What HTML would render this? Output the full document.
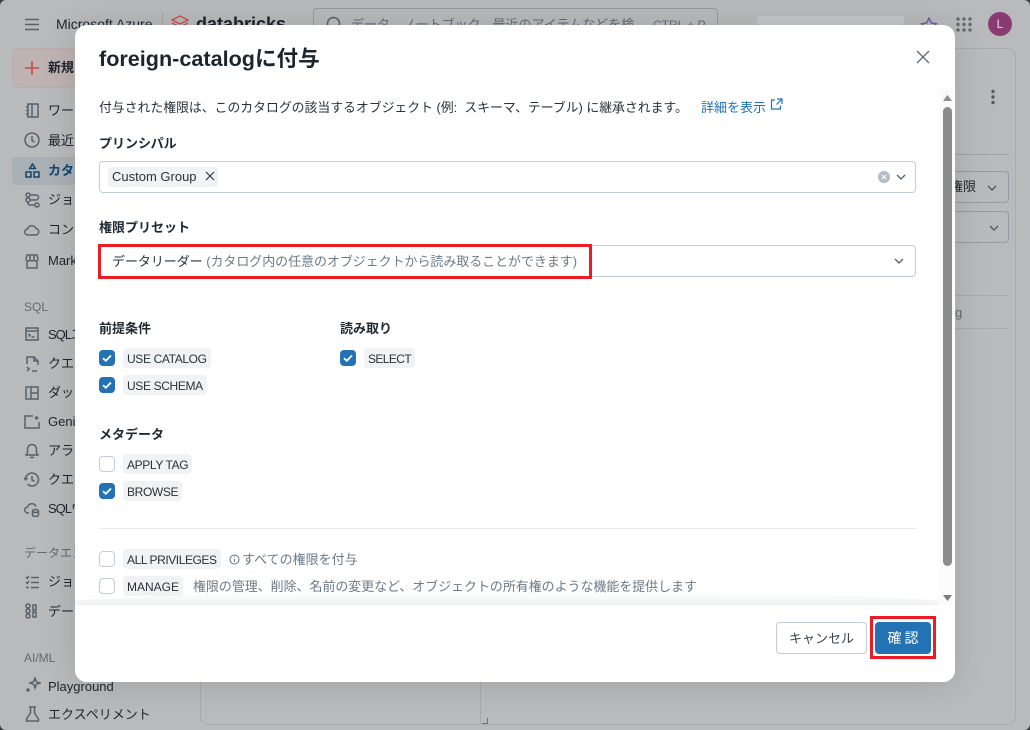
<!DOCTYPE html>
<html lang="ja">
<head>
<meta charset="utf-8">
<style>
html,body{margin:0;padding:0}
body{width:1030px;height:730px;overflow:hidden;position:relative;background:#b9babb;font-family:"Liberation Sans","Noto Sans CJK JP",sans-serif;font-size:13px;color:#1f2a33}
.a{position:absolute;white-space:nowrap}
.bg{color:#1d262d}
.ic{position:absolute;fill:none;stroke:#56636e;stroke-width:1.5}
.grp{color:#5f6b75;font-size:12px}
#modal{position:absolute;left:75px;top:25px;width:880px;height:657px;background:#fff;border-radius:12px;overflow:hidden}
#shadow{position:absolute;left:75px;top:25px;width:880px;height:657px;border-radius:12px;box-shadow:0 2px 34px rgba(0,0,0,.13)}
#modal .a{line-height:18px}
.lb{font-weight:700;font-size:13px;color:#1f2a33;margin-top:1px}
.tag{position:absolute;height:20px;background:#f1f2f4;border-radius:4px;font-size:12px;line-height:22px;padding:0 4px;white-space:nowrap;color:#27323a;box-sizing:border-box;letter-spacing:-.36px}
.cb{position:absolute;width:16px;height:16px;border-radius:4px;box-sizing:border-box}
.on{background:#2272b4}
.off{background:#fff;border:1px solid #c0cdd8}
.cb svg{position:absolute;left:0;top:0}
.sel{position:absolute;left:24px;width:817px;height:32px;border:1px solid #c0cdd8;border-radius:4px;box-sizing:border-box;background:#fff}
.red{position:absolute;border:3px solid #ed1c24;box-sizing:border-box}
.g{color:#6b7a86}
</style>
</head>
<body>
<!-- window corners -->
<div class="a" style="left:0;top:0;width:1030px;height:730px;box-sizing:border-box;border-radius:6px;box-shadow:0 0 0 6px #3a3a3a"></div>

<!-- top bar -->
<svg class="ic" style="left:25px;top:18px" width="14" height="13" viewBox="0 0 14 13"><path d="M0 1.500h14M0 6.500h14M0 11.500h14" stroke-width="1.600"/></svg>
<div class="a bg" style="left:56px;top:15px;font-size:14px;line-height:18px">Microsoft Azure</div>
<div class="a" style="left:162px;top:12px;width:1px;height:14px;background:#a4a6a8"></div>
<svg class="a" style="left:171px;top:15px" width="18" height="12" viewBox="0 0 18 12" fill="none" stroke="#c9504b" stroke-width="1.300"><path d="M1 5l8-4 8 4-8 4zM1 8l8 4 8-4"/></svg>
<div class="a" style="left:196px;top:14px;font-size:18px;font-weight:700;color:#1d2329;line-height:20px">databricks</div>
<div class="a" style="left:313px;top:8px;width:405px;height:30px;border:1px solid #8f9ba5;border-radius:4px;box-sizing:border-box"></div>
<svg class="ic" style="left:326px;top:16px" width="16" height="16" viewBox="0 0 16 16"><circle cx="7.500" cy="7.500" r="6"/></svg>
<div class="a" style="left:351px;top:16px;font-size:13px;color:#626d76;line-height:18px">データ、ノートブック、最近のアイテムなどを検</div>
<div class="a" style="left:653px;top:17px;font-size:12px;color:#626d76;line-height:16px">CTRL + P</div>
<div class="a" style="left:757px;top:16px;width:147px;height:9px;background:#c6c7c8;border-radius:3px"></div>
<svg class="a" style="left:920px;top:17px" width="18" height="16" viewBox="0 0 18 16" fill="none" stroke="#6b5aa8" stroke-width="1.400"><path d="M9 1l2.300 5 5 .7-3.600 3.400 1 5L9 13l-4.700 2.100 1-5L1.700 6.700l5-.7z"/></svg>
<svg class="a" style="left:956px;top:17px" width="16" height="15" viewBox="0 0 16 15" fill="#616b74"><circle cx="2" cy="2" r="1.700"/><circle cx="8" cy="2" r="1.700"/><circle cx="14" cy="2" r="1.700"/><circle cx="2" cy="7.500" r="1.700"/><circle cx="8" cy="7.500" r="1.700"/><circle cx="14" cy="7.500" r="1.700"/><circle cx="2" cy="13" r="1.700"/><circle cx="8" cy="13" r="1.700"/><circle cx="14" cy="13" r="1.700"/></svg>
<div class="a" style="left:988px;top:12px;width:24px;height:24px;border-radius:50%;background:#893a70;color:#e8d9e3;font-size:12px;line-height:24px;text-align:center">L</div>

<!-- sidebar -->
<div class="a" style="left:12px;top:48px;width:80px;height:40px;border-radius:8px;background:#bfb2b2;border:1px solid #b9abab;box-sizing:border-box"></div>
<svg class="a" style="left:25px;top:61px" width="14" height="14" viewBox="0 0 14 14" fill="none" stroke="#c24f4a" stroke-width="1.600"><path d="M7 0v14M0 7h14"/></svg>
<div class="a bg" style="left:48px;top:59px;font-size:13px;font-weight:700;line-height:18px">新規</div>
<div class="a" style="left:12px;top:157px;width:70px;height:28px;border-radius:4px;background:#a9b0b6"></div>

<svg class="ic" style="left:25px;top:103px" width="14" height="15" viewBox="0 0 14 15"><path d="M3 1h10v13H3zM7 1v13M1 4h2M1 7.500h2M1 11h2"/></svg>
<div class="a bg" style="left:48px;top:102px;line-height:18px">ワークスペース</div>
<svg class="ic" style="left:24px;top:132px" width="16" height="16" viewBox="0 0 16 16"><circle cx="8" cy="8" r="7"/><path d="M8 4v4.500l2.500 1.500"/></svg>
<div class="a bg" style="left:48px;top:132px;line-height:18px">最近</div>
<svg class="ic" style="left:25px;top:163px;stroke:#14456f" width="15" height="15" viewBox="0 0 15 15"><path d="M7.500 1l2.800 4.500H4.700zM1 9h5v5H1zM9 9h5v5H9z"/></svg>
<div class="a" style="left:48px;top:162px;line-height:18px;font-weight:700;color:#14456f">カタログ</div>
<svg class="ic" style="left:25px;top:192px" width="15" height="16" viewBox="0 0 15 16"><circle cx="3" cy="3" r="2"/><circle cx="3" cy="8" r="2"/><circle cx="12" cy="13" r="2"/><path d="M5 3h6a2.500 2.500 0 0 1 0 5H5M3 10.500V11a2 2 0 0 0 2 2h5"/></svg>
<div class="a bg" style="left:48px;top:191px;line-height:18px">ジョブ</div>
<svg class="ic" style="left:24px;top:224px" width="16" height="12" viewBox="0 0 16 12"><path d="M4 11a3 3 0 0 1-.5-6A4.500 4.500 0 0 1 12 4.500 3.300 3.300 0 0 1 12 11z"/></svg>
<div class="a bg" style="left:48px;top:221px;line-height:18px">コンピュート</div>
<svg class="ic" style="left:25px;top:254px" width="14" height="15" viewBox="0 0 14 15"><path d="M2 1h10l1 4a2 2 0 0 1-4 0 2 2 0 0 1-4 0 2 2 0 0 1-4 0zM2 7v7h10V7M5 1v4M9 1v4"/></svg>
<div class="a bg" style="left:48px;top:252px;line-height:18px">Marketplace</div>

<div class="a grp" style="left:24px;top:299px;line-height:16px">SQL</div>
<svg class="ic" style="left:25px;top:327px" width="14" height="14" viewBox="0 0 14 14"><path d="M1 1h12v12H1zM1 4h12M3.500 7l1.500 1.300-1.500 1.300M6.500 10h3"/></svg>
<div class="a bg" style="left:48px;top:326px;line-height:18px"><span style="letter-spacing:-1px">SQL</span>エディタ</div>
<svg class="ic" style="left:26px;top:356px" width="13" height="16" viewBox="0 0 13 16"><path d="M1 8V1h7l4 4v4M8 1v4h4M1 11l2 2-2 2M6 15h5"/></svg>
<div class="a bg" style="left:48px;top:355px;line-height:18px">クエリ</div>
<svg class="ic" style="left:25px;top:386px" width="14" height="14" viewBox="0 0 14 14"><path d="M1 1h12v12H1zM6 1v12M6 7h7"/></svg>
<div class="a bg" style="left:48px;top:384px;line-height:18px">ダッシュボード</div>
<svg class="ic" style="left:24px;top:415px" width="16" height="14" viewBox="0 0 16 14"><path d="M9 1H1v12h14V7M12.500 1v4M10.500 3h4"/></svg>
<div class="a bg" style="left:48px;top:413px;line-height:18px">Genie</div>
<svg class="ic" style="left:25px;top:443px" width="14" height="16" viewBox="0 0 14 16"><path d="M1 12h12l-1.500-2V6a4.500 4.500 0 0 0-9 0v4zM5 14.500h4"/></svg>
<div class="a bg" style="left:48px;top:442px;line-height:18px">アラート</div>
<svg class="ic" style="left:24px;top:472px" width="16" height="15" viewBox="0 0 16 15"><path d="M1.500 7.500a6.500 6.500 0 1 1 2 4.700M0 6l1.500 1.800L3.500 6M8 4v4l2.500 1.300"/></svg>
<div class="a bg" style="left:48px;top:471px;line-height:18px">クエリ履歴</div>
<svg class="ic" style="left:24px;top:501px" width="16" height="16" viewBox="0 0 16 16"><path d="M5 12H4a3 3 0 0 1-.5-6A4.500 4.500 0 0 1 12 5.500"/><ellipse cx="11.500" cy="10" rx="3" ry="1.500"/><path d="M8.500 10v4c0 .8 1.300 1.500 3 1.500s3-.7 3-1.500v-4"/></svg>
<div class="a bg" style="left:48px;top:500px;line-height:18px"><span style="letter-spacing:-1px">SQL</span>ウェアハウス</div>

<div class="a grp" style="left:24px;top:545px;line-height:16px">データエンジニアリング</div>
<svg class="ic" style="left:25px;top:575px" width="14" height="14" viewBox="0 0 14 14"><path d="M1 2l1.300 1.300L4 1M1 7l1.300 1.300L4 6M1 12.500h3M6 2.500h8M6 7.500h8M6 12.500h8"/></svg>
<div class="a bg" style="left:48px;top:573px;line-height:18px">ジョブ実行</div>
<svg class="ic" style="left:25px;top:603px" width="14" height="16" viewBox="0 0 14 16"><circle cx="3" cy="3" r="2"/><circle cx="3" cy="8" r="2"/><circle cx="3" cy="13" r="2"/><path d="M8 2h3v5H8zM8 9h3v5H8z"/></svg>
<div class="a bg" style="left:48px;top:603px;line-height:18px">データ取り込み</div>

<div class="a grp" style="left:24px;top:650px;line-height:16px">AI/ML</div>
<svg class="ic" style="left:25px;top:677px" width="16" height="16" viewBox="0 0 16 16"><path d="M10 1l1.300 3.700L15 6l-3.700 1.300L10 11 8.700 7.300 5 6l3.700-1.300zM3 11v4M1 13h4"/></svg>
<div class="a bg" style="left:48px;top:678px;line-height:18px">Playground</div>
<svg class="ic" style="left:25px;top:706px" width="15" height="16" viewBox="0 0 15 16"><path d="M4 1h7M5.500 1v6L1.500 13v2h12v-2l-4-6V1"/></svg>
<div class="a bg" style="left:48px;top:706px;line-height:18px">エクスペリメント</div>

<!-- main card behind -->
<div class="a" style="left:200px;top:48px;width:816px;height:677px;border:1px solid #a9acae;border-radius:8px;box-sizing:border-box"></div>
<div class="a" style="left:480px;top:500px;width:1px;height:225px;background:#a9acae"></div>
<svg class="a" style="left:990px;top:89px" width="6" height="16" viewBox="0 0 6 16" fill="#525c65"><circle cx="3" cy="2.500" r="1.700"/><circle cx="3" cy="8" r="1.700"/><circle cx="3" cy="13.500" r="1.700"/></svg>
<div class="a" style="left:955px;top:154px;width:54px;height:1px;background:#99a3ab"></div>
<div class="a" style="left:940px;top:171px;width:69px;height:32px;border:1px solid #929ca5;border-radius:4px;box-sizing:border-box"></div>
<div class="a" style="left:940px;top:211px;width:69px;height:32px;border:1px solid #929ca5;border-radius:4px;box-sizing:border-box"></div>
<div class="a" style="left:950px;top:178px;font-size:13px;line-height:18px;color:#1d262d">権限</div>
<svg class="ic" style="left:987px;top:185px;stroke:#555f68" width="10" height="6" viewBox="0 0 10 6"><path d="M1 1l4 4 4-4"/></svg>
<svg class="ic" style="left:989px;top:225px;stroke:#555f68" width="10" height="6" viewBox="0 0 10 6"><path d="M1 1l4 4 4-4"/></svg>
<div class="a" style="left:955px;top:295px;width:54px;height:1px;background:#a5acb2"></div>
<div class="a" style="left:955px;top:328px;width:54px;height:1px;background:#a5acb2"></div>
<div class="a" style="left:955px;top:304px;font-size:13px;line-height:18px;color:#5f6b75">g</div>
<svg class="a" style="left:481px;top:717px" width="8" height="8" viewBox="0 0 8 8" fill="none" stroke="#6d7276"><path d="M6.500 1v5.500H1"/></svg>

<!-- modal -->
<div id="shadow"></div>
<div id="modal">
  <div class="a" style="left:24px;top:19px;font-size:21.600px;font-weight:700;line-height:30px!important;color:#1b252d">foreign-catalogに付与</div>
  <svg class="a" style="left:841px;top:25px" width="14" height="14" viewBox="0 0 14 14" fill="none" stroke="#5f6f7c" stroke-width="1.400"><path d="M1 1l12 12M13 1L1 13"/></svg>

  <div class="a" style="left:24px;top:74px;font-size:12.850px;color:#27323a">付与された権限は、このカタログの該当するオブジェクト (例:&nbsp; スキーマ、テーブル) に継承されます。</div>
  <div class="a" style="left:626px;top:74px;font-size:13px;color:#2272b4">詳細を表示</div>
  <svg class="a" style="left:695px;top:73px" width="13" height="12" viewBox="0 0 13 12" fill="none" stroke="#2272b4" stroke-width="1.200"><path d="M5 2H1.500v9h9V7.500M7 1h5v5M12 1L6.500 6.500"/></svg>

  <div class="a lb" style="left:24px;top:109px">プリンシパル</div>
  <div class="sel" style="top:136px"></div>
  <div class="tag" style="left:33px;top:142px;width:110px;padding-left:4px;font-size:13px;letter-spacing:0;line-height:20px">Custom Group</div>
  <svg class="a" style="left:130px;top:146px" width="10" height="10" viewBox="0 0 10 10" fill="none" stroke="#27323a" stroke-width="1.100"><path d="M1 1l8 8M9 1L1 9"/></svg>
  <svg class="a" style="left:803px;top:146px" width="12" height="12" viewBox="0 0 12 12"><circle cx="6" cy="6" r="6" fill="#b5bcc2"/><path d="M4 4l4 4M8 4L4 8" stroke="#fff" stroke-width="1.200"/></svg>
  <svg class="a" style="left:821px;top:149px" width="10" height="6" viewBox="0 0 10 6" fill="none" stroke="#4f5d68" stroke-width="1.300"><path d="M1 1l4 4 4-4"/></svg>

  <div class="a lb" style="left:24px;top:193px">権限プリセット</div>
  <div class="sel" style="top:220px"></div>
  <div class="a" style="left:37px;top:228px;font-size:12.950px"><span style="color:#27323a">データリーダー</span> <span class="g">(カタログ内の任意のオブジェクトから読み取ることができます)</span></div>
  <svg class="a" style="left:819px;top:233px" width="10" height="6" viewBox="0 0 10 6" fill="none" stroke="#4f5d68" stroke-width="1.300"><path d="M1 1l4 4 4-4"/></svg>
  <div class="red" style="left:23px;top:219px;width:494px;height:35px"></div>

  <div class="a lb" style="left:24px;top:294px">前提条件</div>
  <div class="cb on" style="left:24px;top:325px"><svg width="16" height="16" viewBox="0 0 16 16"><path d="M4 8.200l2.800 2.600L12 5.500" fill="none" stroke="#fff" stroke-width="1.800"/></svg></div>
  <div class="tag" style="left:48px;top:323px">USE CATALOG</div>
  <div class="cb on" style="left:24px;top:352px"><svg width="16" height="16" viewBox="0 0 16 16"><path d="M4 8.200l2.800 2.600L12 5.500" fill="none" stroke="#fff" stroke-width="1.800"/></svg></div>
  <div class="tag" style="left:48px;top:350px">USE SCHEMA</div>

  <div class="a lb" style="left:265px;top:294px">読み取り</div>
  <div class="cb on" style="left:265px;top:325px"><svg width="16" height="16" viewBox="0 0 16 16"><path d="M4 8.200l2.800 2.600L12 5.500" fill="none" stroke="#fff" stroke-width="1.800"/></svg></div>
  <div class="tag" style="left:289px;top:323px;letter-spacing:-.6px">SELECT</div>

  <div class="a lb" style="left:24px;top:400px">メタデータ</div>
  <div class="cb off" style="left:24px;top:431px"></div>
  <div class="tag" style="left:48px;top:429px">APPLY TAG</div>
  <div class="cb on" style="left:24px;top:458px"><svg width="16" height="16" viewBox="0 0 16 16"><path d="M4 8.200l2.800 2.600L12 5.500" fill="none" stroke="#fff" stroke-width="1.800"/></svg></div>
  <div class="tag" style="left:48px;top:456px">BROWSE</div>

  <div class="a" style="left:24px;top:503px;width:817px;height:1px;background:#e8ebee"></div>

  <div class="cb off" style="left:24px;top:526px"></div>
  <div class="tag" style="left:48px;top:524px;letter-spacing:-.43px">ALL PRIVILEGES</div>
  <svg class="a" style="left:154px;top:529px" width="11" height="11" viewBox="0 0 11 11" fill="none" stroke="#5f6f7c"><circle cx="5.500" cy="5.500" r="4.500"/><path d="M5.500 5v3M5.500 2.500v1"/></svg>
  <div class="a g" style="left:167px;top:526px;font-size:13px">すべての権限を付与</div>
  <div class="cb off" style="left:24px;top:553px"></div>
  <div class="tag" style="left:48px;top:551px;letter-spacing:0">MANAGE</div>
  <div class="a g" style="left:118px;top:553px;font-size:12.950px">権限の管理、削除、名前の変更など、オブジェクトの所有権のような機能を提供します</div>
  <div class="a" style="left:0;top:566px;width:866px;height:21px;background:linear-gradient(to bottom,rgba(255,255,255,0) 0%,rgba(238,240,240,.9) 70%,#f2f3f3 100%);clip-path:ellipse(60% 100% at 50% 100%)"></div>
  <div class="a" style="left:0;top:580px;width:880px;height:77px;background:#fff"></div>

  <!-- scrollbar -->
  <div class="a" style="left:864px;top:64px;width:15px;height:516px;background:#fbfbfb"></div>
  <div class="a" style="left:868px;top:82px;width:9px;height:459px;background:#8c8c8c;border-radius:5px"></div>
  <svg class="a" style="left:868px;top:70px" width="9" height="6" viewBox="0 0 9 6" fill="#8c8c8c"><path d="M4.500 0L9 6H0z"/></svg>
  <svg class="a" style="left:868px;top:570px" width="9" height="6" viewBox="0 0 9 6" fill="#7c7c7c"><path d="M4.500 6L9 0H0z"/></svg>

  <!-- footer -->
  <div class="a" style="left:701px;top:597px;width:91px;height:32px;border:1px solid #c0cdd8;border-radius:4px;box-sizing:border-box;text-align:center;font-size:13px;line-height:31px!important;color:#3a444c;background:#fff">キャンセル</div>
  <div class="a" style="left:800px;top:597px;width:56px;height:32px;background:#2272b4;border-radius:4px;color:#fff;text-align:center;font-size:14px;line-height:32px!important;letter-spacing:3px;text-indent:3px">確認</div>
  <div class="red" style="left:795px;top:591px;width:66px;height:43px"></div>
</div>
</body>
</html>
